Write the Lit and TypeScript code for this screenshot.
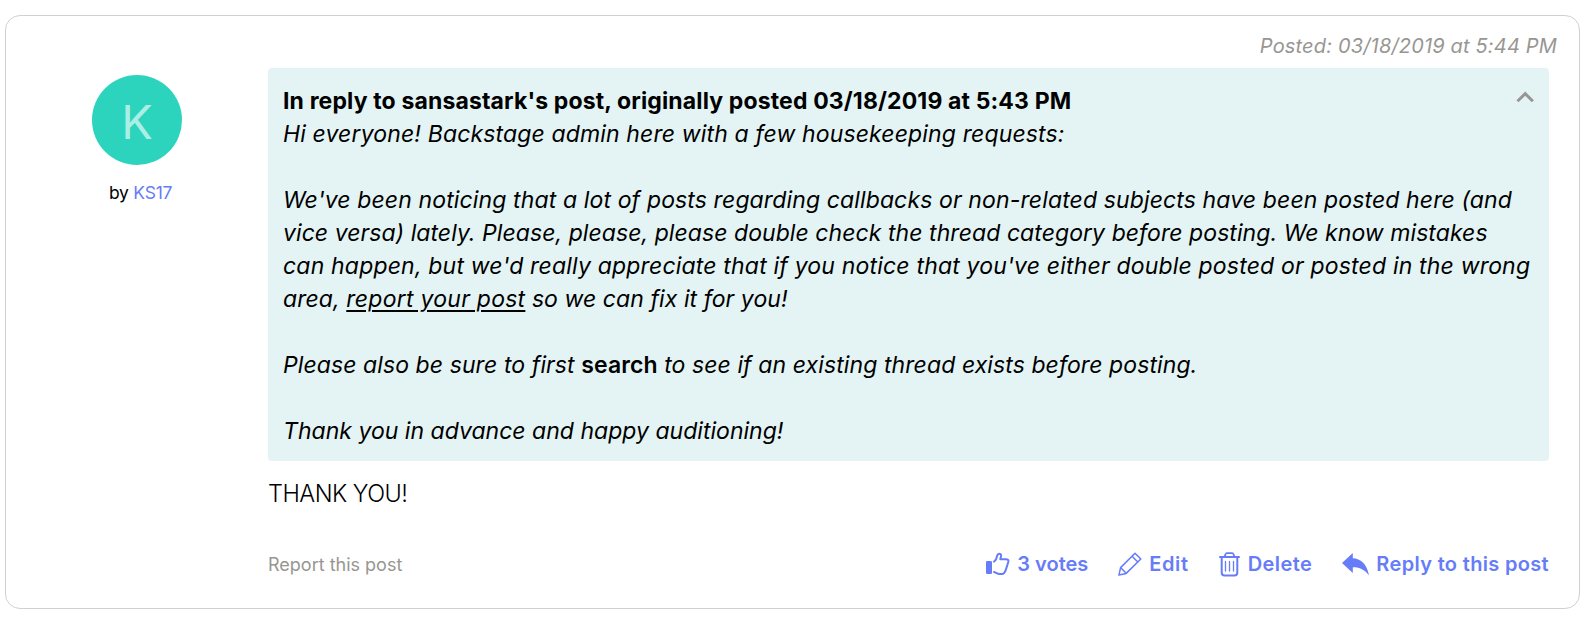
import { LitElement, html, css, svg } from 'lit';
import { customElement } from 'lit/decorators.js';

const thumb = svg`<svg width="25" height="24" viewBox="0 0 25 24" fill="none"><rect x="1" y="9" width="6" height="13" rx="1.2" fill="currentColor"/><path d="M9 9.6 L10.8 7.8 C11.8 6 11.6 4.6 12.5 3 C13.4 1.4 15.3 1.2 16 2.7 C16.5 4 15.5 5.9 15.3 7.3 H21.6 C23.4 7.3 23.8 8.8 23.2 10.3 L20.9 17.6 C20.3 19.6 19.7 21.9 17.3 22 H14.8 C12.2 22 11.3 20.8 9 20" stroke="currentColor" stroke-width="2" stroke-linecap="round" stroke-linejoin="round"/></svg>`;
const pencil = svg`<svg width="24" height="24" viewBox="0 0 24 24" fill="none" stroke="currentColor" stroke-width="1.5" stroke-linejoin="round"><path d="M.9 23.1 L2.6 15.6 L17 1.2 L22.8 7 L8.2 21.4 Z M2.8 15.8 L8.2 21.2 M14 4.2 L19.8 10"/></svg>`;
const trash = svg`<svg width="22" height="25" viewBox="0 0 22 25" fill="none" stroke="currentColor" stroke-linecap="round"><path d="M1 5 H20" stroke-width="2"/><path d="M5.5 4.8 L6.6 2 Q6.9 1.1 7.8 1.1 H13.2 Q14.1 1.1 14.4 2 L15.5 4.8" stroke-width="1.8"/><path d="M2.7 6 V20.6 Q2.7 23.5 5.6 23.5 H15.4 Q18.3 23.5 18.3 20.6 V6" stroke-width="2"/><path d="M6.5 9.5 V19 M10.5 9.5 V19 M14.5 9.5 V19" stroke-width="1.3"/></svg>`;
const reply = svg`<svg width="27" height="24" viewBox="0 0 27 24" fill="currentColor"><path d="M0 11 L10.8 1 V6.3 C18.5 6.6 24.8 11.8 27 23.2 C22 17.3 17.5 15 10.8 15.2 V21 Z"/></svg>`;

@customElement('app-root')
export class AppRoot extends LitElement {
  static styles = css`
    :host { display: block; box-sizing: border-box; height: 623px; padding: 15px 10px 14px 5px; background: #fff; color: #000; font-family: Inter, "Liberation Sans", sans-serif; }
    .card { box-sizing: border-box; height: 594px; border: 1px solid #d0d0ce; border-radius: 15px; display: grid; grid-template-columns: 262px 1281px; grid-template-rows: 52px 1fr; }
    .posted { grid-column: 1 / 3; justify-self: end; margin-top: 17px; margin-right: -8px; font: italic 400 20px/26px Inter, sans-serif; letter-spacing: .17px; color: #989692; white-space: nowrap; }
    .author { padding: 7px 0 0 86px; }
    .avatar { width: 90px; height: 90px; border-radius: 50%; background: #2dd4bd; color: #abeee5; display: flex; align-items: center; justify-content: center; font-size: 47px; font-weight: 400; line-height: 90px; box-sizing: border-box; padding-top: 3px; }
    .by { margin: 16px 0 0 17px; font-size: 17.5px; line-height: 24px; letter-spacing: -.26px; white-space: nowrap; }
    .by a { color: #667cf8; }
    .quote { box-sizing: border-box; height: 393px; display: flex; justify-content: space-between; padding: 17px 15px 13px; border-radius: 4px; background: #e4f4f4; }
    .text { font: italic 400 23px/33px Inter, sans-serif; white-space: nowrap; }
    .line { height: 33px; }
    .head { font-weight: 700; font-style: normal; letter-spacing: .14px; }
    .l1 { letter-spacing: .14px; }
    .l2 { letter-spacing: .125px; }
    .l3 { letter-spacing: .065px; }
    .l4 { letter-spacing: .18px; }
    .l5 { letter-spacing: .07px; }
    .l5 u { letter-spacing: .25px; }
    .l6 { letter-spacing: .09px; }
    .l7 { letter-spacing: .02px; }
    .line b { font-style: normal; font-weight: 600; }
    .line u { text-decoration-thickness: 2px; text-underline-offset: 3px; }
    .chev { flex: none; margin-top: 5px; width: 18px; height: 13px; margin-left: -18px; color: #989692; }
    .reply { margin-top: 16px; font-size: 23.5px; font-weight: 300; line-height: 33px; letter-spacing: -.5px; }
    .foot { display: flex; justify-content: space-between; align-items: center; margin-top: 39px; height: 30px; }
    .report { font-size: 18px; line-height: 30px; padding-top: 2px; color: #989692; }
    .acts { display: flex; gap: 30px; color: #667cf8; font-size: 20px; font-weight: 600; line-height: 30px; white-space: nowrap; }
    .act { display: flex; align-items: center; gap: 7px; }
    .act svg { display: block; flex: none; }
    .wide { letter-spacing: .33px; }
    .mid { letter-spacing: .6px; }
    .del { letter-spacing: .45px; }
  `;

  render() {
    return html`<article class="card">
      <div class="posted">Posted: 03/18/2019 at 5:44 PM</div>
      <div class="author">
        <div class="avatar">K</div>
        <div class="by">by <a>KS17</a></div>
      </div>
      <div class="main">
        <section class="quote">
          <div class="text">
            <div class="line head">In reply to sansastark's post, originally posted 03/18/2019 at 5:43 PM</div>
            <div class="line l1">Hi everyone! Backstage admin here with a few housekeeping requests:</div>
            <div class="line"></div>
            <div class="line l2">We've been noticing that a lot of posts regarding callbacks or non-related subjects have been posted here (and</div>
            <div class="line l3">vice versa) lately. Please, please, please double check the thread category before posting. We know mistakes</div>
            <div class="line l4">can happen, but we'd really appreciate that if you notice that you've either double posted or posted in the wrong</div>
            <div class="line l5">area, <u>report your post</u> so we can fix it for you!</div>
            <div class="line"></div>
            <div class="line l6">Please also be sure to first <b>search</b> to see if an existing thread exists before posting.</div>
            <div class="line"></div>
            <div class="line l7">Thank you in advance and happy auditioning!</div>
          </div>
          <svg class="chev" viewBox="0 0 18 13"><path d="M1.5 11.3 L9.2 3.6 L16.9 11.3" fill="none" stroke="currentColor" stroke-width="3"/></svg>
        </section>
        <div class="reply">THANK YOU!</div>
        <div class="foot">
          <span class="report">Report this post</span>
          <div class="acts">
            <span class="act">${thumb}<span>3 votes</span></span>
            <span class="act">${pencil}<span class="mid">Edit</span></span>
            <span class="act">${trash}<span class="del">Delete</span></span>
            <span class="act">${reply}<span class="wide">Reply to this post</span></span>
          </div>
        </div>
      </div>
    </article>`;
  }
}
